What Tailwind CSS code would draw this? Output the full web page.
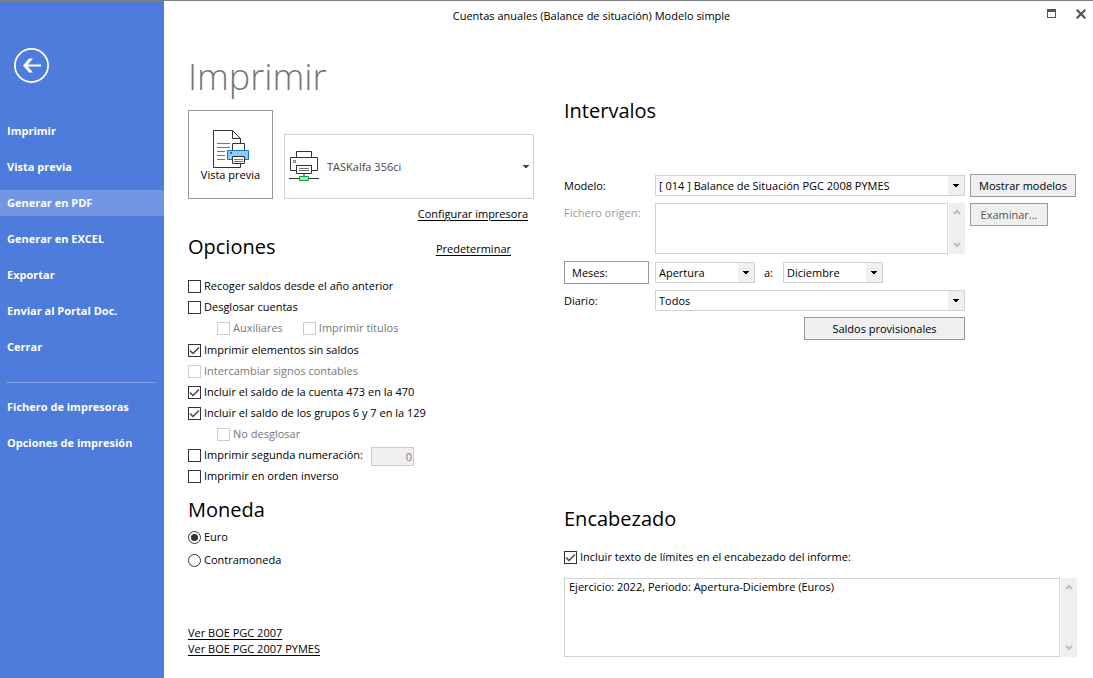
<!DOCTYPE html>
<html lang="es">
<head>
<meta charset="utf-8">
<meta name="viewport" content="width=device-width, initial-scale=1">
<title>Cuentas anuales (Balance de situación) Modelo simple</title>
<script src="https://cdn.jsdelivr.net/npm/@tailwindcss/browser@4"></script>
</head>
<body class="flex min-h-screen border-t border-[#808080] bg-white font-['Open_Sans','Noto_Sans',sans-serif] text-[11px] leading-4 text-black">

<svg class="hidden" aria-hidden="true">
  <symbol id="tick" viewBox="0 0 13 13"><path d="M2 6.5 5 9.5 11 3.5" fill="none" stroke="#444" stroke-width="1.5"/></symbol>
  <symbol id="caret" viewBox="0 0 16 19"><path d="M5 8h6v1h-1v1H9v1H7v-1H6V9H5z" fill="currentColor"/></symbol>
  <symbol id="up" viewBox="0 0 8 6"><path d="M1 5 4 2 7 5" fill="none" stroke="#bdbdbd" stroke-width="2"/></symbol>
  <symbol id="down" viewBox="0 0 8 6"><path d="M1 1 4 4 7 1" fill="none" stroke="#bdbdbd" stroke-width="2"/></symbol>
</svg>

<aside class="w-[164px] shrink-0 bg-[#4d7cdc] pt-[47px] font-bold text-white">
  <button type="button" aria-label="Volver" class="ml-[14px] block size-[35px]">
    <svg viewBox="0 0 35 35" class="size-full" fill="none" stroke="#fff"><circle cx="17.5" cy="17.5" r="16.6" stroke-width="1.8"/><path d="M27 17.5H11" stroke-width="2"/><path d="M9 17.5 15 10.5H19L13 17.5 19 24.500H15Z" fill="#fff" stroke="none"/></svg>
  </button>
  <nav class="mt-[35px]">
    <ul class="flex flex-col gap-[10px]">
      <li><a href="#" class="block px-[7px] py-[5px]">Imprimir</a></li>
      <li><a href="#" class="block px-[7px] py-[5px]">Vista previa</a></li>
      <li><a href="#" aria-current="page" class="block bg-[#7296e3] px-[7px] py-[5px]">Generar en PDF</a></li>
      <li><a href="#" class="block px-[7px] py-[5px]">Generar en EXCEL</a></li>
      <li><a href="#" class="block px-[7px] py-[5px]">Exportar</a></li>
      <li><a href="#" class="block px-[7px] py-[5px]">Enviar al Portal Doc.</a></li>
      <li><a href="#" class="block px-[7px] py-[5px]">Cerrar</a></li>
    </ul>
    <hr class="mt-[22px] mr-2 mb-[11px] ml-[6px] border-[#7b9ce4]">
    <ul class="flex flex-col gap-[10px]">
      <li><a href="#" class="block px-[7px] py-[5px]">Fichero de impresoras</a></li>
      <li><a href="#" class="block px-[7px] py-[5px]">Opciones de impresión</a></li>
    </ul>
  </nav>
</aside>

<div class="flex min-w-0 flex-1 flex-col">
  <header class="flex h-[30px] items-center">
    <p class="flex-1 text-center">Cuentas anuales (Balance de situación) Modelo simple</p>
    <div class="flex w-[74px] items-center justify-end gap-5 pr-[7px] pb-[5px]">
      <button type="button" aria-label="Maximizar"><svg class="block h-[9px] w-[9px]" viewBox="0 0 9 9"><path d="M0 0h9v9H0zM1 3v5h7V3z" fill="#555" fill-rule="evenodd"/></svg></button>
      <button type="button" aria-label="Cerrar"><svg class="block h-[10px] w-[10px]" viewBox="0 0 10 10"><path d="M.7.7 9.300 9.300M9.300.7.7 9.300" stroke="#555" stroke-width="2.200"/></svg></button>
    </div>
  </header>

  <main class="grid flex-1 grid-cols-[346px_minmax(0,1fr)] gap-x-[30px] pr-4 pb-[21px] pl-6">
    <section class="flex flex-col">
      <h1 class="mt-[22px] text-[36px] leading-[48px] font-light text-[#757575]">Imprimir</h1>
      <div class="mt-[9px] flex items-end gap-[11px]">
        <button type="button" class="flex h-[89px] w-[85px] flex-col items-center border border-[#999] pt-[19px]">
          <svg class="h-[39px] w-[37px]" viewBox="0 0 37 39" fill="none" stroke="#333">
            <path d="M28.500 34v3.500H1.500V.5h19l8 8V13M20.500.5v8h8" fill="#fff"/>
            <path d="M5 13.500h13M5 17.500h13M5 21.500h8M5 25.500h8M5 29.500h8" stroke="#777"/>
            <path d="M20.500 20v-6.500h12V20" fill="#fff"/>
            <path d="M15.500 20.500h21v9h-21z" fill="#92c9f0" stroke="#1072c4"/>
            <path d="M18 22h2v2h-2z" fill="#1072c4" stroke="none"/>
            <path d="M20.500 26.500h12v7h-12z" fill="#fff"/>
            <path d="M22 29.500h9M22 31.500h9" stroke="#777"/>
          </svg>
          <span class="leading-3">Vista previa</span>
        </button>
        <div class="grid h-[65px] min-w-0 flex-1 items-center">
          <select aria-label="Impresora" class="col-start-1 row-start-1 h-full w-full appearance-none border border-[#d2d2d2] bg-white pl-[42px] text-[#444]"><option>TASKalfa 356ci</option></select>
          <svg class="pointer-events-none col-start-1 row-start-1 ml-[5px] h-[31px] w-[30px]" viewBox="0 0 30 31" fill="none" stroke="#333">
            <path d="M7.500 7V.5h15V7"/>
            <path d="M7 19.500H1.500v-13h27v13H23"/>
            <path d="M4.500 9.500h2v2h-2z" stroke="#777"/>
            <path d="M7.500 14.500h15v8h-15z" fill="#fff"/>
            <path d="M10 17.500h10M10 19.500h10" stroke="#777"/>
            <path d="M0 27.500h30M15 23v3"/>
            <path d="M10.500 25.500h9v4h-9z" fill="#b9e3c0" stroke="#119a48"/>
          </svg>
          <svg class="pointer-events-none col-start-1 row-start-1 h-[19px] w-4 justify-self-end text-[#444]"><use href="#caret"/></svg>
        </div>
      </div>
      <a href="#" class="mt-[7px] mr-[6px] self-end underline underline-offset-2">Configurar impresora</a>
      <div class="mt-[9px] flex items-center justify-between pr-[23px]">
        <h2 class="text-[20px] leading-[32px]">Opciones</h2>
        <a href="#" class="pt-1 underline underline-offset-2">Predeterminar</a>
      </div>

      <div class="mt-[15px] flex flex-col gap-[5px]">
        <label class="flex items-center gap-[3px]"><span class="grid"><input type="checkbox" class="peer col-start-1 row-start-1 size-[13px] appearance-none border border-[#333] bg-white"><svg class="pointer-events-none invisible col-start-1 row-start-1 size-[13px] peer-checked:visible"><use href="#tick"/></svg></span>Recoger saldos desde el año anterior</label>
        <label class="flex items-center gap-[3px]"><span class="grid"><input type="checkbox" class="peer col-start-1 row-start-1 size-[13px] appearance-none border border-[#333] bg-white"><svg class="pointer-events-none invisible col-start-1 row-start-1 size-[13px] peer-checked:visible"><use href="#tick"/></svg></span>Desglosar cuentas</label>
        <div class="flex gap-5 pb-px pl-[29px] text-[#777]">
          <label class="flex items-center gap-[3px]"><input type="checkbox" disabled class="size-[13px] appearance-none border border-[#ccc] bg-white">Auxiliares</label>
          <label class="flex items-center gap-[3px]"><input type="checkbox" disabled class="size-[13px] appearance-none border border-[#ccc] bg-white">Imprimir títulos</label>
        </div>
        <label class="flex items-center gap-[3px]"><span class="grid"><input type="checkbox" checked class="peer col-start-1 row-start-1 size-[13px] appearance-none border border-[#333] bg-white"><svg class="pointer-events-none invisible col-start-1 row-start-1 size-[13px] peer-checked:visible"><use href="#tick"/></svg></span>Imprimir elementos sin saldos</label>
        <label class="flex items-center gap-[3px] text-[#777]"><input type="checkbox" disabled class="size-[13px] appearance-none border border-[#ccc] bg-white">Intercambiar signos contables</label>
        <label class="flex items-center gap-[3px]"><span class="grid"><input type="checkbox" checked class="peer col-start-1 row-start-1 size-[13px] appearance-none border border-[#333] bg-white"><svg class="pointer-events-none invisible col-start-1 row-start-1 size-[13px] peer-checked:visible"><use href="#tick"/></svg></span>Incluir el saldo de la cuenta 473 en la 470</label>
        <label class="flex items-center gap-[3px]"><span class="grid"><input type="checkbox" checked class="peer col-start-1 row-start-1 size-[13px] appearance-none border border-[#333] bg-white"><svg class="pointer-events-none invisible col-start-1 row-start-1 size-[13px] peer-checked:visible"><use href="#tick"/></svg></span>Incluir el saldo de los grupos 6 y 7 en la 129</label>
        <label class="flex items-center gap-[3px] pl-[29px] text-[#777]"><input type="checkbox" disabled class="size-[13px] appearance-none border border-[#ccc] bg-white">No desglosar</label>
        <div class="flex h-4 items-center">
          <label class="flex w-[183px] items-center gap-[3px]"><span class="grid"><input type="checkbox" class="peer col-start-1 row-start-1 size-[13px] appearance-none border border-[#333] bg-white"><svg class="pointer-events-none invisible col-start-1 row-start-1 size-[13px] peer-checked:visible"><use href="#tick"/></svg></span>Imprimir segunda numeración:</label>
          <input type="text" value="0" disabled aria-label="Segunda numeración" class="mt-[3px] h-[19px] w-[43px] border border-[#ccc] bg-[#efefef] pr-px text-right text-[#777]">
        </div>
        <label class="flex items-center gap-[3px]"><span class="grid"><input type="checkbox" class="peer col-start-1 row-start-1 size-[13px] appearance-none border border-[#333] bg-white"><svg class="pointer-events-none invisible col-start-1 row-start-1 size-[13px] peer-checked:visible"><use href="#tick"/></svg></span>Imprimir en orden inverso</label>
      </div>

      <h2 class="mt-[10px] text-[20px] leading-[32px]">Moneda</h2>
      <div class="mt-[3px] flex flex-col gap-[7px]">
        <label class="flex items-center gap-[3px]"><span class="grid place-items-center"><input type="radio" name="moneda" checked class="peer col-start-1 row-start-1 size-[13px] appearance-none rounded-full border border-[#333] bg-white"><span class="pointer-events-none invisible col-start-1 row-start-1 size-[7px] rounded-full bg-[#333] peer-checked:visible"></span></span>Euro</label>
        <label class="flex items-center gap-[3px]"><span class="grid place-items-center"><input type="radio" name="moneda" class="peer col-start-1 row-start-1 size-[13px] appearance-none rounded-full border border-[#333] bg-white"><span class="pointer-events-none invisible col-start-1 row-start-1 size-[7px] rounded-full bg-[#333] peer-checked:visible"></span></span>Contramoneda</label>
      </div>
      <div class="mt-auto flex flex-col items-start">
        <a href="#" class="underline underline-offset-2">Ver BOE PGC 2007</a>
        <a href="#" class="underline underline-offset-2">Ver BOE PGC 2007 PYMES</a>
      </div>
    </section>

    <section class="flex min-w-0 flex-col">
      <h2 class="mt-[64px] text-[20px] leading-[32px]">Intervalos</h2>
      <div class="mt-[47px] grid grid-cols-[86px_minmax(0,1fr)_107px] items-start gap-x-[5px] gap-y-[6px]">
        <label for="modelo" class="self-center">Modelo:</label>
        <div class="grid self-center">
          <select id="modelo" class="col-start-1 row-start-1 h-[21px] w-full appearance-none border border-[#d2d2d2] bg-white pl-[3px]"><option>[ 014 ] Balance de Situación PGC 2008 PYMES</option></select>
          <svg class="pointer-events-none col-start-1 row-start-1 m-px h-[19px] w-4 justify-self-end bg-[#efefef]"><use href="#caret"/></svg>
        </div>
        <button type="button" class="h-[23px] w-[106px] border border-[#999] bg-[#efefef]">Mostrar modelos</button>

        <label for="origen" class="pt-[2px] text-[#999]">Fichero origen:</label>
        <div class="mb-px flex h-[51px] gap-px">
          <textarea id="origen" disabled class="h-full min-w-0 flex-1 resize-none border border-[#d2d2d2] bg-white px-1"></textarea>
          <div class="flex w-4 flex-col items-center justify-between bg-[#efefef] py-[6px]"><svg class="h-[6px] w-2"><use href="#up"/></svg><svg class="h-[6px] w-2"><use href="#down"/></svg></div>
        </div>
        <button type="button" disabled class="h-[23px] w-[78px] border border-[#999] bg-[#efefef] text-[#555]">Examinar...</button>

        <button type="button" class="h-[23px] w-[85px] border border-[#999] bg-white pl-[7px] text-left">Meses:</button>
        <div class="flex items-center self-center">
          <div class="grid w-[100px]">
            <select aria-label="Mes inicial" class="col-start-1 row-start-1 h-[21px] w-full appearance-none border border-[#d2d2d2] bg-white pl-[3px]"><option>Apertura</option></select>
            <svg class="pointer-events-none col-start-1 row-start-1 m-px h-[19px] w-4 justify-self-end bg-[#efefef]"><use href="#caret"/></svg>
          </div>
          <label for="hasta" class="w-[28px] pl-[9px]">a:</label>
          <div class="grid w-[100px]">
            <select id="hasta" class="col-start-1 row-start-1 h-[21px] w-full appearance-none border border-[#d2d2d2] bg-white pl-[3px]"><option>Diciembre</option></select>
            <svg class="pointer-events-none col-start-1 row-start-1 m-px h-[19px] w-4 justify-self-end bg-[#efefef]"><use href="#caret"/></svg>
          </div>
        </div>
        <span></span>

        <label for="diario" class="self-center">Diario:</label>
        <div class="grid">
          <select id="diario" class="col-start-1 row-start-1 h-[21px] w-full appearance-none border border-[#d2d2d2] bg-white pl-[3px]"><option>Todos</option></select>
          <svg class="pointer-events-none col-start-1 row-start-1 m-px h-[19px] w-4 justify-self-end bg-[#efefef]"><use href="#caret"/></svg>
        </div>
        <button type="button" class="col-start-2 h-[23px] w-[161px] justify-self-end border border-[#999] bg-[#efefef]">Saldos provisionales</button>
      </div>

      <div class="mt-auto">
        <h2 class="text-[20px] leading-[32px]">Encabezado</h2>
        <label class="mt-[14px] flex items-center gap-[3px]"><span class="grid"><input type="checkbox" checked class="peer col-start-1 row-start-1 size-[13px] appearance-none border border-[#333] bg-white"><svg class="pointer-events-none invisible col-start-1 row-start-1 size-[13px] peer-checked:visible"><use href="#tick"/></svg></span>Incluir texto de límites en el encabezado del informe:</label>
        <div class="mt-[13px] flex h-[79px] gap-px">
          <textarea aria-label="Texto del encabezado" class="h-full min-w-0 flex-1 resize-none border border-[#d2d2d2] bg-white px-1">Ejercicio: 2022, Periodo: Apertura-Diciembre (Euros)</textarea>
          <div class="flex w-4 flex-col items-center justify-between bg-[#efefef] py-[6px]"><svg class="h-[6px] w-2"><use href="#up"/></svg><svg class="h-[6px] w-2"><use href="#down"/></svg></div>
        </div>
      </div>
    </section>
  </main>
</div>
</body>
</html>
